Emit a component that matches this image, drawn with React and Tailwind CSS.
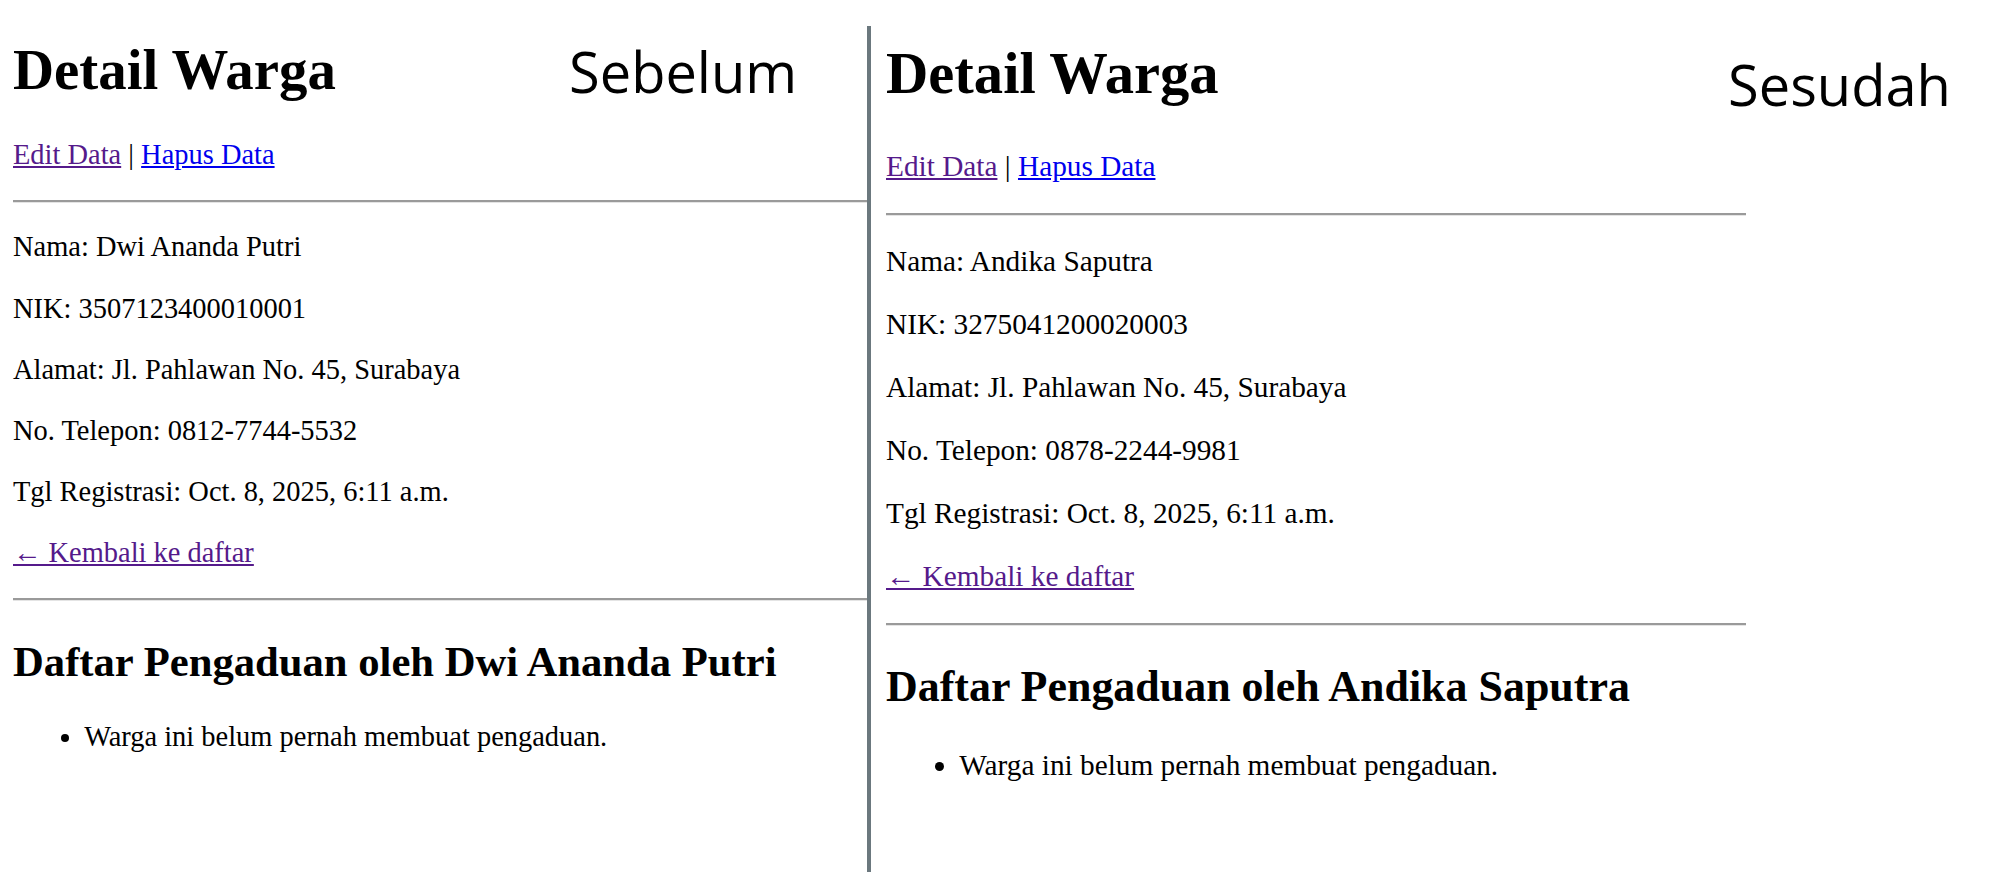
import React from "react";

const wargaSebelum = {
  nama: "Dwi Ananda Putri",
  nik: "3507123400010001",
  alamat: "Jl. Pahlawan No. 45, Surabaya",
  telepon: "0812-7744-5532",
  tgl: "Oct. 8, 2025, 6:11 a.m.",
};

const wargaSesudah = {
  nama: "Andika Saputra",
  nik: "3275041200020003",
  alamat: "Jl. Pahlawan No. 45, Surabaya",
  telepon: "0878-2244-9981",
  tgl: "Oct. 8, 2025, 6:11 a.m.",
};

// sizes are in em so each panel only needs its own base font-size
function DetailWarga({ warga, titleClass }) {
  return (
    <div>
      <h1 className={"text-[2em] font-bold leading-[1.15] mt-0 " + titleClass}>
        Detail Warga
      </h1>
      <p className="my-[1em] leading-[1.15]">
        <a href="#" className="text-[#551a8b] underline">
          Edit Data
        </a>{" "}
        |{" "}
        <a href="#" className="text-[#0000ee] underline">
          Hapus Data
        </a>
      </p>
      <hr className="my-[0.5em] h-0 border-0 border-t-2 border-b border-t-[#9a9a9a] border-b-[#e4e4e4]" />
      <p className="my-[1em] leading-[1.15]">Nama: {warga.nama}</p>
      <p className="my-[1em] leading-[1.15]">NIK: {warga.nik}</p>
      <p className="my-[1em] leading-[1.15]">Alamat: {warga.alamat}</p>
      <p className="my-[1em] leading-[1.15]">No. Telepon: {warga.telepon}</p>
      <p className="my-[1em] leading-[1.15]">Tgl Registrasi: {warga.tgl}</p>
      <p className="my-[1em] leading-[1.15]">
        <a href="#" className="text-[#551a8b] underline">
          ← Kembali ke daftar
        </a>
      </p>
      <hr className="my-[0.5em] h-0 border-0 border-t-2 border-b border-t-[#9a9a9a] border-b-[#e4e4e4]" />
      <h2 className="text-[1.5em] font-bold leading-[1.15] my-[0.83em]">
        Daftar Pengaduan oleh {warga.nama}
      </h2>
      <ul className="list-disc pl-[2.5em] my-[1em]">
        <li className="leading-[1.15]">Warga ini belum pernah membuat pengaduan.</li>
      </ul>
    </div>
  );
}

export default function App() {
  return (
    <div className="relative h-[872px] w-[2000px] overflow-hidden bg-white text-black font-['Liberation_Serif',serif]">
      <div className="flex h-full">
        <div className="w-[867px] shrink-0 overflow-hidden pt-[37px] pl-[13px] text-[28.45px]">
          <DetailWarga warga={wargaSebelum} titleClass="mb-[0.64em]" />
        </div>
        <div className="w-[4px] shrink-0 mt-[26px] bg-[#6b787e]" />
        <div className="flex-1 pt-[40px] pl-[15px] text-[29.3px]">
          <div className="w-[860px]">
            <DetailWarga warga={wargaSesudah} titleClass="mb-[0.72em]" />
          </div>
        </div>
      </div>

      <div className="absolute left-[569px] top-[43px] text-[56px] leading-none font-['Open_Sans',sans-serif]">
        Sebelum
      </div>
      <div className="absolute left-[1728px] top-[56px] text-[56px] leading-none font-['Open_Sans',sans-serif]">
        Sesudah
      </div>
    </div>
  );
}
